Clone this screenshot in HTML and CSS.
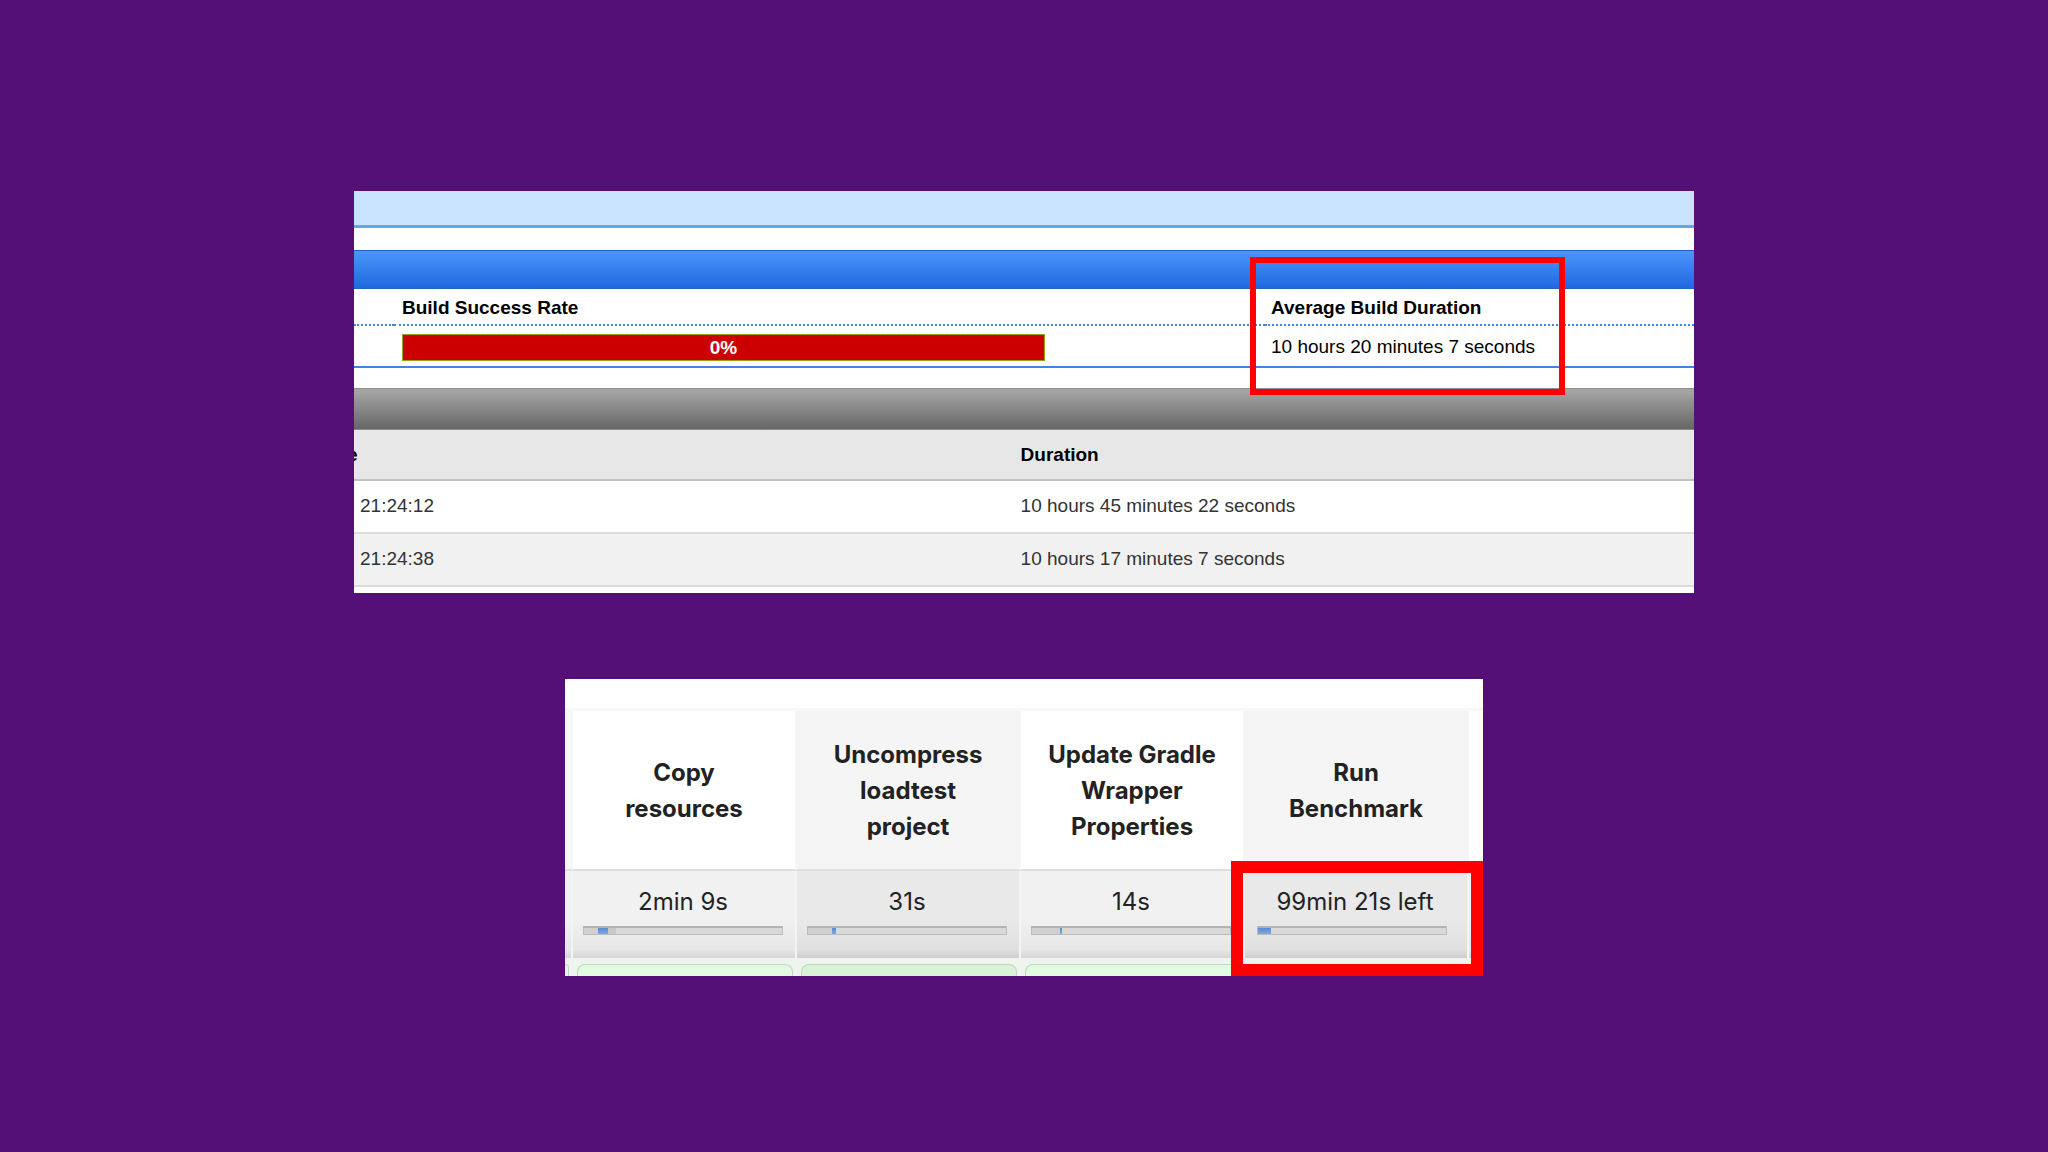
FILE: index.html
```
<!DOCTYPE html>
<html lang="en">

<head>
    <meta charset="UTF-8">
    <meta name="viewport" content="width=device-width, initial-scale=1.0">
    <title>Build durations</title>
    <link rel="stylesheet" href="styles.css">
</head>

<body>

    <section class="panel builds">
        <div class="top-bar"></div>
        <div class="blue-bar"></div>
        <table class="summary">
            <colgroup>
                <col class="col-edge">
                <col class="col-rate">
                <col>
            </colgroup>
            <tr>
                <th></th>
                <th>Build Success Rate</th>
                <th>Average Build Duration</th>
            </tr>
            <tr>
                <td></td>
                <td><div class="rate">0%</div></td>
                <td>10 hours 20 minutes 7 seconds</td>
            </tr>
        </table>
        <div class="gray-bar"></div>
        <table class="history">
            <tr>
                <th class="cut">e</th>
                <th>Duration</th>
            </tr>
            <tr>
                <td>21:24:12</td>
                <td>10 hours 45 minutes 22 seconds</td>
            </tr>
            <tr>
                <td>21:24:38</td>
                <td>10 hours 17 minutes 7 seconds</td>
            </tr>
        </table>
        <div class="highlight highlight-average"></div>
    </section>

    <section class="panel stages">
        <table>
            <colgroup>
                <col class="col-left">
                <col>
                <col>
                <col>
                <col>
                <col class="col-right">
            </colgroup>
            <tr class="names">
                <th></th>
                <th>Copy<br>resources</th>
                <th>Uncompress<br>loadtest<br>project</th>
                <th>Update Gradle<br>Wrapper<br>Properties</th>
                <th>Run<br>Benchmark</th>
                <th></th>
            </tr>
            <tr class="times">
                <td></td>
                <td>2min 9s<div class="bar"><span class="before" style="width: 7%"></span><span class="fill" style="width: 5%"></span><span class="after"></span></div></td>
                <td>31s<div class="bar"><span class="before" style="width: 12%"></span><span class="fill" style="width: 2%"></span></div></td>
                <td>14s<div class="bar"><span class="before" style="width: 14%"></span><span class="fill" style="width: 1%"></span></div></td>
                <td>99min 21s left<div class="bar bar-left"><span class="fill" style="width: 7%"></span></div></td>
                <td></td>
            </tr>
            <tr class="runs">
                <td class="run-edge"><div class="run"></div></td>
                <td><div class="run"></div></td>
                <td><div class="run"></div></td>
                <td><div class="run"></div></td>
                <td></td>
                <td></td>
            </tr>
        </table>
        <div class="highlight highlight-benchmark"></div>
    </section>

</body>

</html>
```
FILE: styles.css
```
* {
    box-sizing: border-box;
}

body {
    background: #541077;
    min-height: 100vh;
    margin: 0;
    padding-top: 15px;
    display: flex;
    flex-direction: column;
    align-items: center;
    justify-content: center;
    gap: 86px;
}

.panel {
    position: relative;
    background: #fff;
    width: 90%;
    overflow: hidden;
}

table {
    width: 100%;
    table-layout: fixed;
    border-collapse: separate;
    border-spacing: 0;
}

th,
td {
    padding: 0;
}

.highlight {
    position: absolute;
    border: 6px solid #f00;
}

/* Build summary and history */
.builds {
    max-width: 1340px;
    padding-bottom: 6px;
    font-family: "Liberation Sans", Arial, sans-serif;
    font-size: 19px;
    line-height: 22px;
}

.builds th,
.builds td {
    text-align: left;
}

.top-bar {
    height: 37px;
    margin-bottom: 22px;
    background: #c9e3fc;
    border-bottom: 3px solid #62a7e4;
}

.blue-bar {
    height: 39px;
    background: linear-gradient(#4a97fa, #2068e2);
    border-top: 1px solid #2363c0;
    border-bottom: 1px solid #2363c0;
}

.summary {
    margin-bottom: 20px;
}

.col-edge {
    width: 40px;
}

.col-rate {
    width: 65%;
}

.summary th,
.summary td {
    padding: 2px 6px 0;
}

.summary th:nth-child(2),
.summary td:nth-child(2) {
    padding-left: 8px;
}

.summary th {
    height: 37px;
    border-bottom: 2px dotted #4385e6;
}

.summary td {
    height: 42px;
    border-bottom: 2px solid #4382df;
}

.rate {
    width: 75%;
    height: 27px;
    line-height: 26px;
    background: #c00;
    border: 1px solid #96a31c;
    color: #fff;
    font-weight: bold;
    text-align: center;
}

.gray-bar {
    height: 42px;
    background: linear-gradient(#a8a8a8, #666);
    border-top: 1px solid #909090;
    border-bottom: 1px solid #8c8c8c;
}

.history th,
.history td {
    padding: 0 0 2px 10px;
    height: 53px;
    border-bottom: 2px solid #dcdcdc;
}

.history th {
    height: 51px;
    padding-bottom: 0;
    background: #e7e7e7;
    border-color: #c2c2c2;
}

.history td {
    color: #333;
}

.history th:first-child,
.history td:first-child {
    width: 49%;
    padding-left: 6px;
}

/* column title runs off the left edge of the panel */
.history .cut {
    text-indent: -13px;
}

.history tr:last-child td {
    background: #f1f1f1;
}

.highlight-average {
    top: 66px;
    right: 129px;
    width: 315px;
    height: 138px;
}

/* Pipeline stages */
.stages {
    max-width: 918px;
    padding-top: 29px;
    font-family: Inter, sans-serif;
    font-size: 24px;
    line-height: 36px;
    color: #222;
}

.stages table {
    border-top: 3px solid #f8f8f8;
}

.col-left {
    width: 8px;
}

.col-right {
    width: 14px;
}

.names th {
    height: 160px;
    padding-top: 2px;
    border-right: 2px solid #f6f6f6;
    border-bottom: 2px solid #dedede;
    font-weight: 700;
}

.names th:first-child {
    background: #f8f8f8;
}

.names th:nth-child(odd):not(:first-child) {
    background: #f5f5f5;
}

.names th:last-child {
    border-right: none;
}

.times td {
    height: 87px;
    padding: 13px 12px 0 10px;
    vertical-align: top;
    text-align: center;
    background: linear-gradient(#f1f1f1 55%, #e7e7e7 90%, #d6d6d6);
    border-right: 2px solid #f4f4f4;
}

.times td:first-child,
.times td:last-child {
    padding: 0;
}

.times td:nth-child(3),
.times td:nth-child(5) {
    background: linear-gradient(#e9e9e9 55%, #e0e0e0 90%, #cecece);
}

.bar {
    display: flex;
    height: 9px;
    margin-top: 6px;
    background: #d9d9d9;
    border: 1px solid #bcbcbc;
    border-top: 2px solid #b4b4b4;
}

.before {
    background: #d0d0d0;
}

.after {
    width: 8px;
    background: #c8c8ca;
}

.fill {
    background: linear-gradient(#5b8bcb, #7da9e3);
}

.bar-left {
    margin-left: 2px;
    margin-right: 8px;
}

.runs td {
    height: 18px;
    padding: 6px 4px 0;
    background: #f0f4ee;
}

.run {
    height: 12px;
    background: #e3fae2;
    border: 1px solid #bfd8be;
    border-bottom: none;
    border-radius: 8px 8px 0 0;
}

.runs td:nth-child(3) .run {
    background: #d9f3d8;
}

/* only the right end of the previous run shows */
.runs .run-edge {
    padding-left: 0;
}

.run-edge .run {
    border-left: none;
    border-radius: 0 8px 0 0;
}

.highlight-benchmark {
    right: 0;
    bottom: 0;
    width: 252px;
    height: 115px;
    border-width: 12px;
}
```
